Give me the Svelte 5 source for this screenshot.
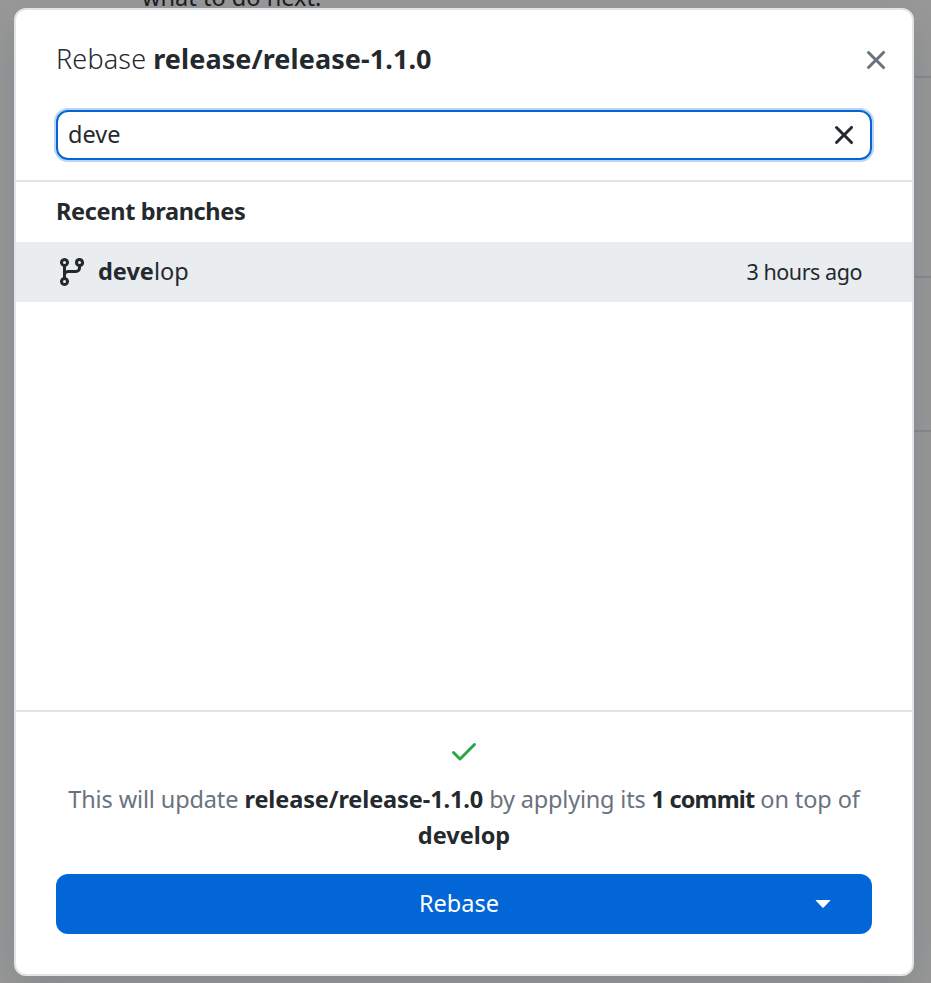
<script>
  let query = $state('deve');
  const icons = {
    x: 'M3.72 3.72a.75.75 0 0 1 1.06 0L8 6.94l3.22-3.22a.75.75 0 1 1 1.06 1.06L9.06 8l3.22 3.22a.75.75 0 1 1-1.06 1.06L8 9.06l-3.22 3.22a.75.75 0 0 1-1.06-1.06L6.94 8 3.72 4.78a.75.75 0 0 1 0-1.06Z',
    branch: 'M9.5 3.25a2.25 2.25 0 1 1 3 2.122V6A2.5 2.5 0 0 1 10 8.5H6a1 1 0 0 0-1 1v1.128a2.251 2.251 0 1 1-1.5 0V5.372a2.25 2.25 0 1 1 1.5 0v1.836A2.493 2.493 0 0 1 6 7h4a1 1 0 0 0 1-1v-.628A2.25 2.25 0 0 1 9.5 3.25Zm-6 0a.75.75 0 1 0 1.5 0 .75.75 0 0 0-1.5 0Zm8.25-.75a.75.75 0 1 0 0 1.5.75.75 0 0 0 0-1.5ZM4.25 12a.75.75 0 1 0 0 1.5.75.75 0 0 0 0-1.5Z',
    check: 'M13.78 4.22a.75.75 0 0 1 0 1.06l-7.25 7.25a.75.75 0 0 1-1.06 0L2.22 9.28a.751.751 0 0 1 .018-1.042.751.751 0 0 1 1.042-.018L6 10.94l6.72-6.72a.75.75 0 0 1 1.06 0Z'
  };
</script>

{#snippet icon(d)}
  <svg width="32" height="32" viewBox="0 0 16 16" fill="currentColor" aria-hidden="true"><path {d} /></svg>
{/snippet}

<div class="screen">
  <div class="backdrop" aria-hidden="true">
    <p>what to do next.</p>
    <div class="panel first"></div>
    <div class="panel second"></div>
    <div class="panel third"></div>
  </div>

  <div class="dialog" role="dialog" aria-label="Rebase">
    <header>
      <h1><span class="light">Rebase</span> <strong>release/release-1.1.0</strong></h1>
      <button class="plain close" aria-label="Close">{@render icon(icons.x)}</button>
    </header>

    <div class="filter">
      <div class="field">
        <input bind:value={query} aria-label="Filter" />
        <button class="plain" aria-label="Clear">{@render icon(icons.x)}</button>
      </div>
    </div>

    <div class="list">
      <h2>Recent branches</h2>
      <div class="row">
        {@render icon(icons.branch)}
        <span class="name"><strong>deve</strong><span>lop</span></span>
        <span class="time">3 hours ago</span>
      </div>
    </div>

    <footer>
      <div class="status">{@render icon(icons.check)}</div>
      <p class="message">
        <span class="m1">This will update</span> <strong class="ref">release/release-1.1.0</strong>
        <span class="m2">by applying its</span> <strong class="count">1 commit</strong>
        <span class="m3">on top of</span><br /><strong>develop</strong>
      </p>
      <button class="primary">
        <span class="label">Rebase</span>
        <svg class="caret" width="16" height="8" viewBox="0 0 16 8" aria-hidden="true"><path d="M1.1 0h13.8q.8.2.2.8L8.6 7.4q-.6.5-1.2 0L.9.8Q.3.2 1.1 0Z" fill="currentColor" /></svg>
      </button>
    </footer>
  </div>
</div>

<style>
  :global(body) { margin: 0; overflow: hidden; }
  * { box-sizing: border-box; }
  .screen {
    position: relative;
    width: 931px;
    height: 983px;
    padding: 8px 17px 7px 14px;
    overflow: hidden;
    background: #999;
    color: #24292e;
    font-family: 'Noto Sans', 'Open Sans', sans-serif;
    font-size: 23.5px;
  }
  .backdrop { position: absolute; inset: 0; }
  .backdrop p { margin: -21px 0 0 142px; height: 97px; line-height: 36px; color: #16191c; letter-spacing: 0.03px; white-space: nowrap; }
  .panel { margin-left: 500px; border-top: 2px solid #87898c; }
  .first { height: 200px; }
  .second { height: 154px; }
  .dialog {
    position: relative;
    display: flex;
    flex-direction: column;
    height: 968px;
    border: 2px solid #e1e4e8;
    border-radius: 12px;
    background: #fff;
    box-shadow: 0 16px 48px rgba(89, 96, 103, 0.32);
  }
  header { display: flex; align-items: center; justify-content: space-between; height: 100px; padding: 0 20px 0 40px; }
  h1, h2, p { margin: 0; font-weight: 400; white-space: nowrap; }
  h1 { padding-bottom: 2px; font-size: 27px; line-height: 38px; }
  h1 strong { letter-spacing: 0.08px; }
  .light { font-weight: 300; letter-spacing: 0.15px; }
  strong { font-weight: 700; }
  svg { display: block; flex: none; }
  button { font: inherit; border: 0; padding: 0; }
  .plain { background: none; color: #24292e; }
  .close { color: #6a737d; }
  .filter { padding: 0 40px 20px; border-bottom: 2px solid #e1e4e8; }
  .field {
    display: flex;
    align-items: center;
    height: 50px;
    padding: 0 10px;
    border: 2px solid #0366d6;
    border-radius: 12px;
    box-shadow: 0 0 0 2px rgba(3, 102, 214, 0.28);
  }
  input { flex: 1; min-width: 0; border: 0; outline: 0; padding: 0 0 2px; background: none; color: inherit; font: inherit; }
  .list { flex: 1; }
  h2 { height: 60px; padding-left: 40px; font-size: 23.5px; line-height: 58px; font-weight: 700; letter-spacing: -0.35px; }
  .row { display: flex; align-items: center; height: 60px; padding: 0 50px 0 40px; background: #e9edf0; }
  .name { margin-left: 10px; padding-bottom: 2px; }
  .time { margin-left: auto; padding-bottom: 1px; font-size: 21.5px; letter-spacing: -0.45px; }
  footer { height: 264px; padding: 23px 40px 0; border-top: 2px solid #e1e4e8; }
  .status { display: flex; justify-content: center; height: 46px; color: #28a745; }
  .message { height: 93px; color: #6a737d; text-align: center; line-height: 36px; }
  .message strong { color: #24292e; }
  .m1 { letter-spacing: -0.13px; }
  .message .ref { letter-spacing: -0.1px; }
  .m2 { letter-spacing: -0.2px; }
  .message .count { letter-spacing: -0.85px; }
  .m3 { letter-spacing: -0.12px; }
  .primary { display: flex; align-items: center; width: 816px; height: 60px; padding-right: 41px; border-radius: 12px; background: #0366d6; color: #fff; }
  .label { flex: 1; padding: 0 0 2px 47px; text-align: center; }
</style>
